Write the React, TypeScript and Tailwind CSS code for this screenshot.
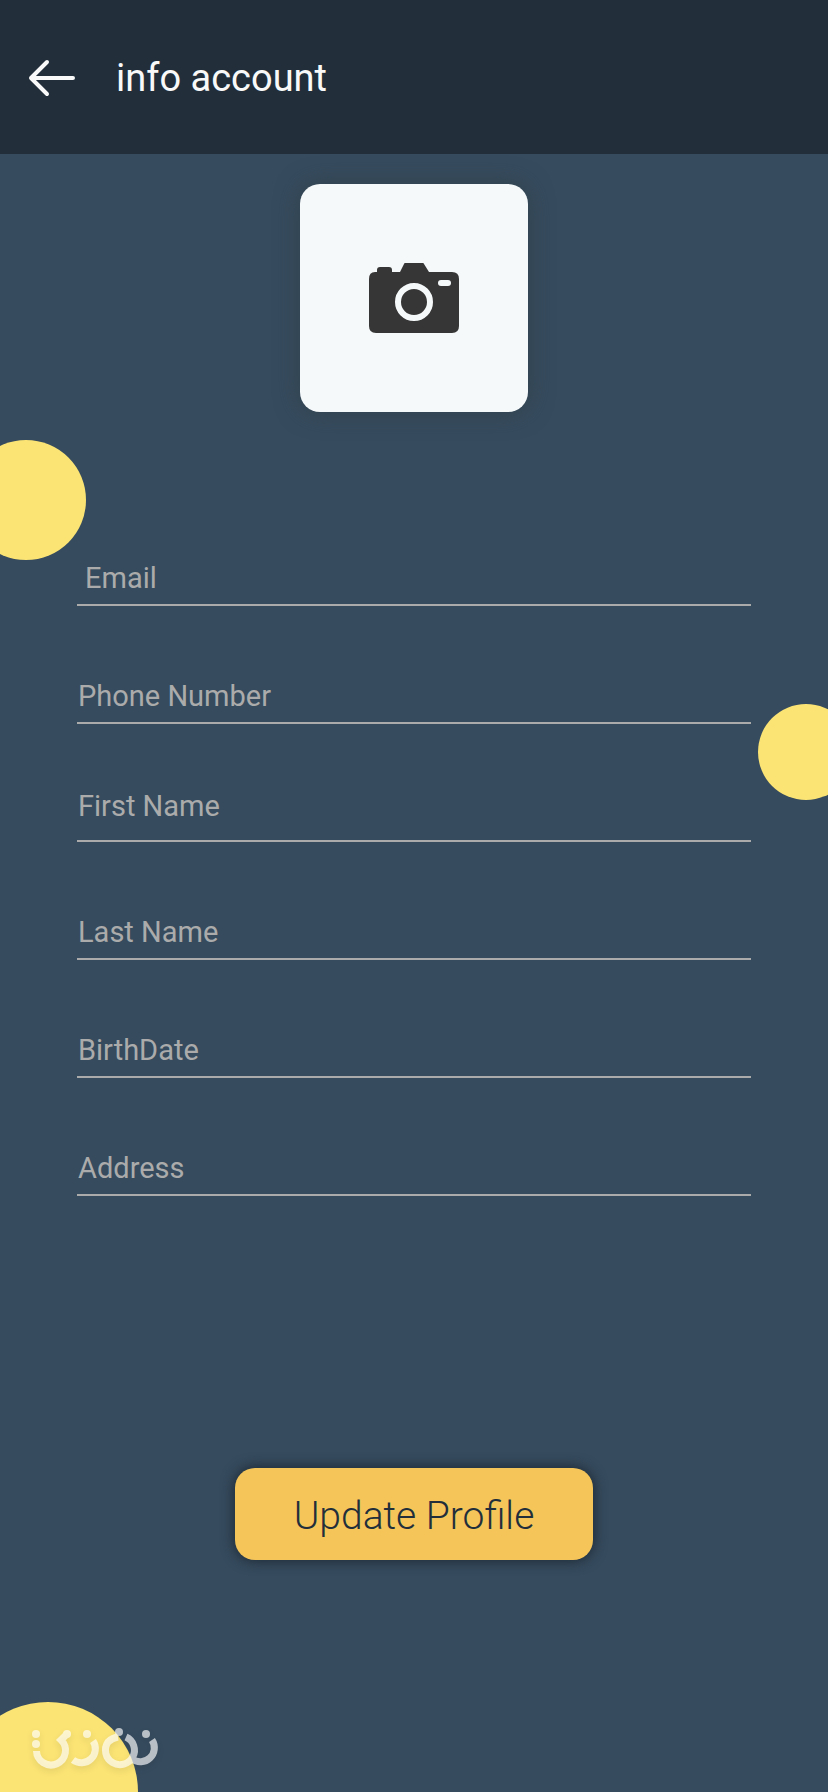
import type { FormEvent } from "react";
import clsx from "clsx";

interface Field {
  name: string;
  label: string;
  type: string;
  className: string;
}

const FIELDS: Field[] = [
  { name: "email", label: "Email", type: "email", className: "pl-2" },
  { name: "phone", label: "Phone Number", type: "tel", className: "pl-px" },
  { name: "firstName", label: "First Name", type: "text", className: "pb-4 pl-px" },
  { name: "lastName", label: "Last Name", type: "text", className: "pl-px" },
  { name: "birthDate", label: "BirthDate", type: "text", className: "pl-px" },
  { name: "address", label: "Address", type: "text", className: "pl-px" },
];

function BackArrow() {
  return (
    <svg viewBox="0 0 48 40" className="h-10 w-12" fill="none" stroke="currentColor" strokeWidth="4" strokeLinecap="round" strokeLinejoin="round" aria-hidden="true">
      <path d="M45 20H3M19 4L3 20l16 16" />
    </svg>
  );
}

function CameraIcon() {
  return (
    <svg viewBox="0 0 90 70" className="h-[70px] w-[90px]" aria-hidden="true">
      <path
        fill="#363636"
        d="M6 8h2V6q0-3 3-3h9q3 0 3 3v2h8l4-8q1-2 3-2h14q2 0 3 2l5 8h23q7 0 7 7v47q0 7-7 7H7q-7 0-7-7V15q0-7 6-7z"
        transform="translate(0 1)"
      />
      <circle cx="45" cy="39" r="16" fill="none" stroke="#f6f9fa" strokeWidth="6" />
      <rect x="69" y="17" width="13" height="6" rx="3" fill="#f6f9fa" />
    </svg>
  );
}

function Watermark() {
  return (
    <svg viewBox="0 0 140 56" className="absolute bottom-4 left-6 h-14 w-[140px] drop-shadow-md" aria-hidden="true">
      <g opacity="0.65" fill="#fff">
        <circle cx="12" cy="14" r="4" />
        <circle cx="12" cy="24" r="4" />
        <circle cx="63" cy="14" r="4" />
        <circle cx="95" cy="12" r="4" />
        <circle cx="122" cy="14" r="4" />
        <circle cx="43" cy="14" r="4" />
        <g fill="none" stroke="#fff" strokeWidth="7">
          <path d="M12.5 31A14.5 14.5 0 1 0 37 20L43 14" />
          <path d="M49 40A14 14 0 0 0 69 21" />
          <path d="M102 17A14.5 14.5 0 1 1 84 22Q88 18 94 17" />
          <path d="M108 39A14 14 0 0 0 128 20" />
        </g>
      </g>
    </svg>
  );
}

export default function App() {
  const onSubmit = (e: FormEvent) => e.preventDefault();

  return (
    <div className="relative flex min-h-screen flex-col overflow-hidden bg-[#364b5e] font-[Roboto,sans-serif]">
      <div className="absolute top-[440px] -left-[34px] size-[120px] rounded-full bg-[#fbe474]" />
      <div className="absolute top-[704px] -right-[26px] size-24 rounded-full bg-[#fbe474]" />
      <div className="absolute -bottom-[90px] -left-[42px] size-[180px] rounded-full bg-[#fbe474]" />

      <header className="flex h-[154px] items-center gap-10 bg-[#222f3b] px-7 pt-0.5 text-[#f9f9f9]">
        <button type="button" aria-label="Back">
          <BackArrow />
        </button>
        <h1 className="text-[38px] leading-12">info account</h1>
      </header>

      <main className="flex flex-1 flex-col items-center pt-[30px] pb-16">
        <button
          type="button"
          aria-label="Change photo"
          className="flex size-[228px] items-center justify-center rounded-[20px] bg-[#f6f9fa] shadow-[0_0_24px_rgba(48,64,70,0.8)]"
        >
          <CameraIcon />
        </button>

        <form onSubmit={onSubmit} className="mt-[140px] flex w-full flex-col items-center">
          <div className="flex w-full flex-col gap-16 px-[77px]">
            {FIELDS.map((f) => (
              <input
                key={f.name}
                name={f.name}
                type={f.type}
                aria-label={f.label}
                placeholder={f.label}
                className={clsx(
                  "h-[54px] w-full border-b-2 border-[#ababab] bg-transparent text-[29px] text-[#ababab] outline-none placeholder:text-[#ababab]",
                  f.className,
                )}
              />
            ))}
          </div>

          <button
            type="submit"
            className="mt-[272px] h-[92px] w-[358px] rounded-[20px] bg-[#f5c55a] pt-1 text-[39px] font-light text-[#222f3b] shadow-[0_0_14px_rgba(20,28,36,0.85)]"
          >
            Update Profile
          </button>
        </form>
      </main>

      <Watermark />
    </div>
  );
}
